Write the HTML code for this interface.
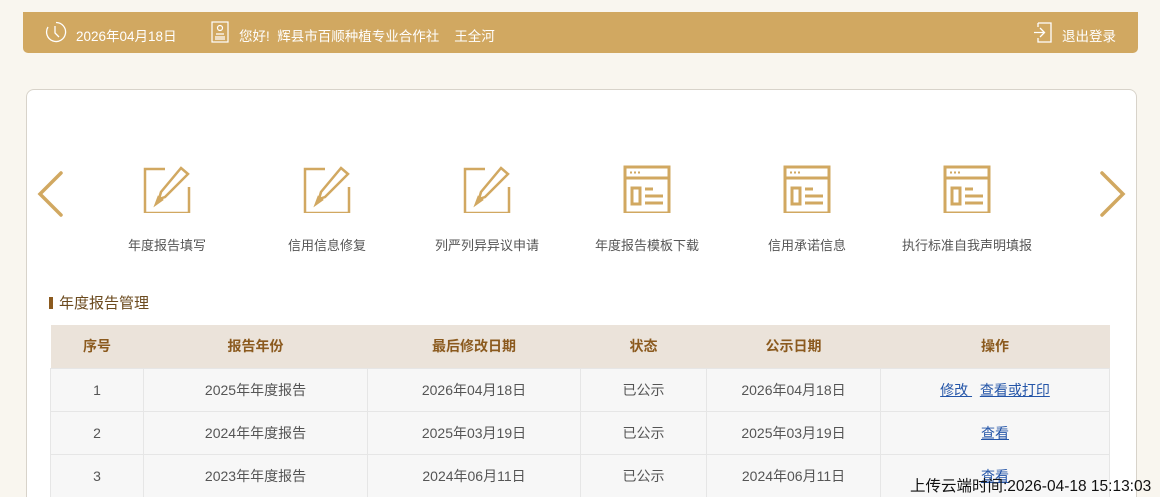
<!DOCTYPE html>
<html><head><meta charset="utf-8"><style>
*{margin:0;padding:0;box-sizing:border-box}
html,body{width:1160px;height:497px;overflow:hidden}
body{background:#f9f6ef;font-family:"Liberation Sans","Noto Sans CJK SC",sans-serif;position:relative;color:#555}
.hdr{position:absolute;left:23px;top:12px;width:1115px;height:41px;background:#d1a861;border-radius:0 0 5px 5px;color:#fff;font-size:13.5px}
.hdr span{position:absolute;top:13px}
.card{position:absolute;left:26px;top:89px;width:1111px;height:420px;background:#fff;border:1px solid #d8d3ca;border-radius:8px}
.ic{position:absolute;top:165px;width:48px;height:48px}
.lb{position:absolute;top:235px;width:160px;text-align:center;font-size:13px;color:#555}
.title{position:absolute;left:49px;top:292px;font-size:15px;color:#6b4a1e}
.title i{display:inline-block;width:4px;height:12px;background:#8b5a1e;margin-right:6px;vertical-align:-1px}
table{position:absolute;left:50px;top:325px;width:1060px;border-collapse:collapse;font-size:14px}
th{background:#ebe3da;color:#8b5a1e;height:43px;font-weight:bold}
td{background:#f7f7f7;height:43px;text-align:center;border:1px solid #e6e6e6;color:#555}
a{color:#2455a8;text-decoration:underline}
.ft{position:absolute;left:910px;top:474px;font-size:15.5px;color:#111;white-space:nowrap}
</style></head><body>
<div class="hdr">
<svg style="position:absolute;left:22px;top:9px" width="22" height="22" viewBox="0 0 22 22" fill="none" stroke="#fff" stroke-width="1.3"><path d="M11 1.5A9.5 9.5 0 1 1 3 6"/><path d="M10 5v7l4 4"/></svg>
<span style="left:53px">2026年04月18日</span>
<svg style="position:absolute;left:188px;top:9px" width="18" height="22" viewBox="0 0 18 22" fill="none" stroke="#fff" stroke-width="1.2"><rect x="1" y="1" width="16" height="20"/><circle cx="9" cy="7" r="2.5"/><path d="M5 13h8M4 16h10M4 18h10"/></svg>
<span style="left:216px">您好!&nbsp; 辉县市百顺种植专业合作社&nbsp;&nbsp;&nbsp; 王全河</span>
<svg style="position:absolute;left:1010px;top:10px" width="20" height="21" viewBox="0 0 20 21" fill="none" stroke="#fff" stroke-width="1.3"><path d="M5 1h13v19H5v-4M5 1v4"/><path d="M1 10.5h10M7 6l4.5 4.5L7 15"/></svg>
<span style="left:1039px">退出登录</span>
</div>
<div class="card"></div>
<svg style="position:absolute;left:37px;top:171px" width="27" height="46" viewBox="0 0 27 46" fill="none" stroke="#d1a861" stroke-width="3.5" stroke-linecap="round"><path d="M24 2L3 23l21 21"/></svg>
<svg style="position:absolute;left:1099px;top:171px" width="27" height="46" viewBox="0 0 27 46" fill="none" stroke="#d1a861" stroke-width="3.5" stroke-linecap="round"><path d="M3 2l21 21L3 44"/></svg>
<svg class="ic" style="left:143px" viewBox="0 0 48 48" fill="none" stroke="#d1a861" stroke-width="2.5"><path d="M22 4H2v44h44V22"/><path d="M38 3l7 6L22 32l-6 2 2-7z"/><path d="M20 34l-7 5 3-8" fill="#d1a861"/></svg>
<svg class="ic" style="left:303px" viewBox="0 0 48 48" fill="none" stroke="#d1a861" stroke-width="2.5"><path d="M22 4H2v44h44V22"/><path d="M38 3l7 6L22 32l-6 2 2-7z"/><path d="M20 34l-7 5 3-8" fill="#d1a861"/></svg>
<svg class="ic" style="left:463px" viewBox="0 0 48 48" fill="none" stroke="#d1a861" stroke-width="2.5"><path d="M22 4H2v44h44V22"/><path d="M38 3l7 6L22 32l-6 2 2-7z"/><path d="M20 34l-7 5 3-8" fill="#d1a861"/></svg>
<svg class="ic" style="left:623px" viewBox="0 0 48 48" fill="none" stroke="#d1a861" stroke-width="3"><rect x="2" y="2" width="44" height="11"/><path d="M2 13v35h44V13"/><rect x="9" y="23" width="8" height="16"/><path d="M22 24h8M22 31h18M22 38h18"/><path d="M7 7.5h2M11 7.5h2M15 7.5h2" stroke-width="2"/></svg>
<svg class="ic" style="left:783px" viewBox="0 0 48 48" fill="none" stroke="#d1a861" stroke-width="3"><rect x="2" y="2" width="44" height="11"/><path d="M2 13v35h44V13"/><rect x="9" y="23" width="8" height="16"/><path d="M22 24h8M22 31h18M22 38h18"/><path d="M7 7.5h2M11 7.5h2M15 7.5h2" stroke-width="2"/></svg>
<svg class="ic" style="left:943px" viewBox="0 0 48 48" fill="none" stroke="#d1a861" stroke-width="3"><rect x="2" y="2" width="44" height="11"/><path d="M2 13v35h44V13"/><rect x="9" y="23" width="8" height="16"/><path d="M22 24h8M22 31h18M22 38h18"/><path d="M7 7.5h2M11 7.5h2M15 7.5h2" stroke-width="2"/></svg>
<div class="lb" style="left:87px">年度报告填写</div>
<div class="lb" style="left:247px">信用信息修复</div>
<div class="lb" style="left:407px">列严列异异议申请</div>
<div class="lb" style="left:567px">年度报告模板下载</div>
<div class="lb" style="left:727px">信用承诺信息</div>
<div class="lb" style="left:887px">执行标准自我声明填报</div>
<div class="title"><i></i>年度报告管理</div>
<table>
<tr><th style="width:93px">序号</th><th style="width:224px">报告年份</th><th style="width:213px">最后修改日期</th><th style="width:126px">状态</th><th style="width:174px">公示日期</th><th>操作</th></tr>
<tr><td>1</td><td>2025年年度报告</td><td>2026年04月18日</td><td>已公示</td><td>2026年04月18日</td><td><a>修改&nbsp;</a>&nbsp; <a>查看或打印</a></td></tr>
<tr><td>2</td><td>2024年年度报告</td><td>2025年03月19日</td><td>已公示</td><td>2025年03月19日</td><td><a>查看</a></td></tr>
<tr><td>3</td><td>2023年年度报告</td><td>2024年06月11日</td><td>已公示</td><td>2024年06月11日</td><td><a>查看</a></td></tr>
</table>
<div class="ft">上传云端时间:2026-04-18 15:13:03</div>
</body></html>
